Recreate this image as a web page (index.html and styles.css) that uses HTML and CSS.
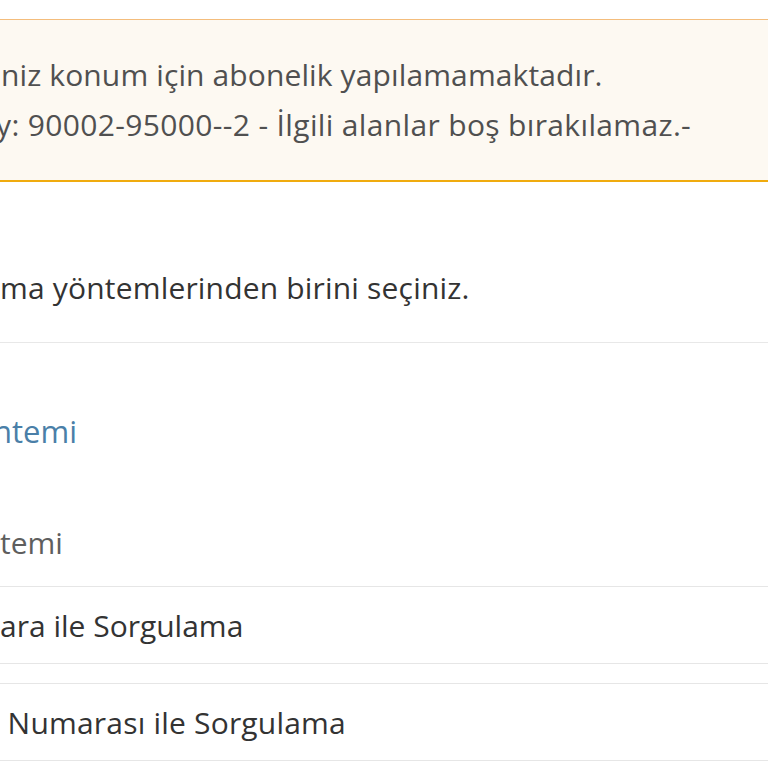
FILE: index.html
```html
<!DOCTYPE html>
<html lang="tr">
<head>
<meta charset="utf-8">
<title>Sorgulama</title>
<link rel="stylesheet" href="styles.css">
</head>
<body>
<div class="page">
  <div class="alert">
    <p class="alert-line line-a">niz konum için abonelik yapılamamaktadır.</p>
    <p class="alert-line line-b">y: 90002-95000--2 - İlgili alanlar boş bırakılamaz.-</p>
  </div>
  <p class="intro">ma yöntemlerinden birini seçiniz.</p>
  <h2 class="section-title">ntemi</h2>
  <p class="field-label">temi</p>
  <ul class="options">
    <li class="option opt-a">ara ile Sorgulama</li>
    <li class="option opt-b">u Numarası ile Sorgulama</li>
  </ul>
</div>
</body>
</html>
```

FILE: styles.css
```css
html, body {
  margin: 0;
  padding: 0;
  background: #ffffff;
  overflow: hidden;
}
body {
  width: 768px;
  height: 768px;
  font-family: "Open Sans", "Liberation Sans", sans-serif;
}
.page {
  width: 768px;
}
.alert {
  margin-top: 19px;
  border-top: 1px solid #f4bd7c;
  border-bottom: 2px solid #f0ab0e;
  background: #fdf9f2;
  padding: 30px 0 30px 0;
  white-space: nowrap;
  overflow: hidden;
}
.alert-line {
  margin: 0;
  font-size: 30px;
  line-height: 50px;
  color: #505050;
}
.line-a { padding-left: 1px; letter-spacing: 0.12px; }
.line-b { text-indent: -4px; letter-spacing: 0.35px; }
.intro {
  margin: 86px 0 0 0;
  padding-bottom: 34px;
  border-bottom: 1px solid #e8e8e8;
  font-size: 30px;
  line-height: 40px;
  letter-spacing: 0.18px;
  color: #333333;
  white-space: nowrap;
}
.section-title {
  margin: 68px 0 0 0;
  font-size: 31px;
  line-height: 40px;
  font-weight: 400;
  color: #4a7fa8;
  text-indent: -7px;
  white-space: nowrap;
}
.field-label {
  margin: 72px 0 0 0;
  font-size: 30px;
  line-height: 40px;
  color: #5e5e5e;
}
.options {
  list-style: none;
  margin: 23px 0 0 0;
  padding: 0;
  display: flex;
  flex-direction: column;
  gap: 19px;
}
.option {
  border-top: 1px solid #e6e6e6;
  border-bottom: 1px solid #e6e6e6;
  padding: 19px 0 17px 0;
  font-size: 30px;
  line-height: 40px;
  color: #333333;
  white-space: nowrap;
}
.opt-b { text-indent: -19px; letter-spacing: 0.2px; }
```
